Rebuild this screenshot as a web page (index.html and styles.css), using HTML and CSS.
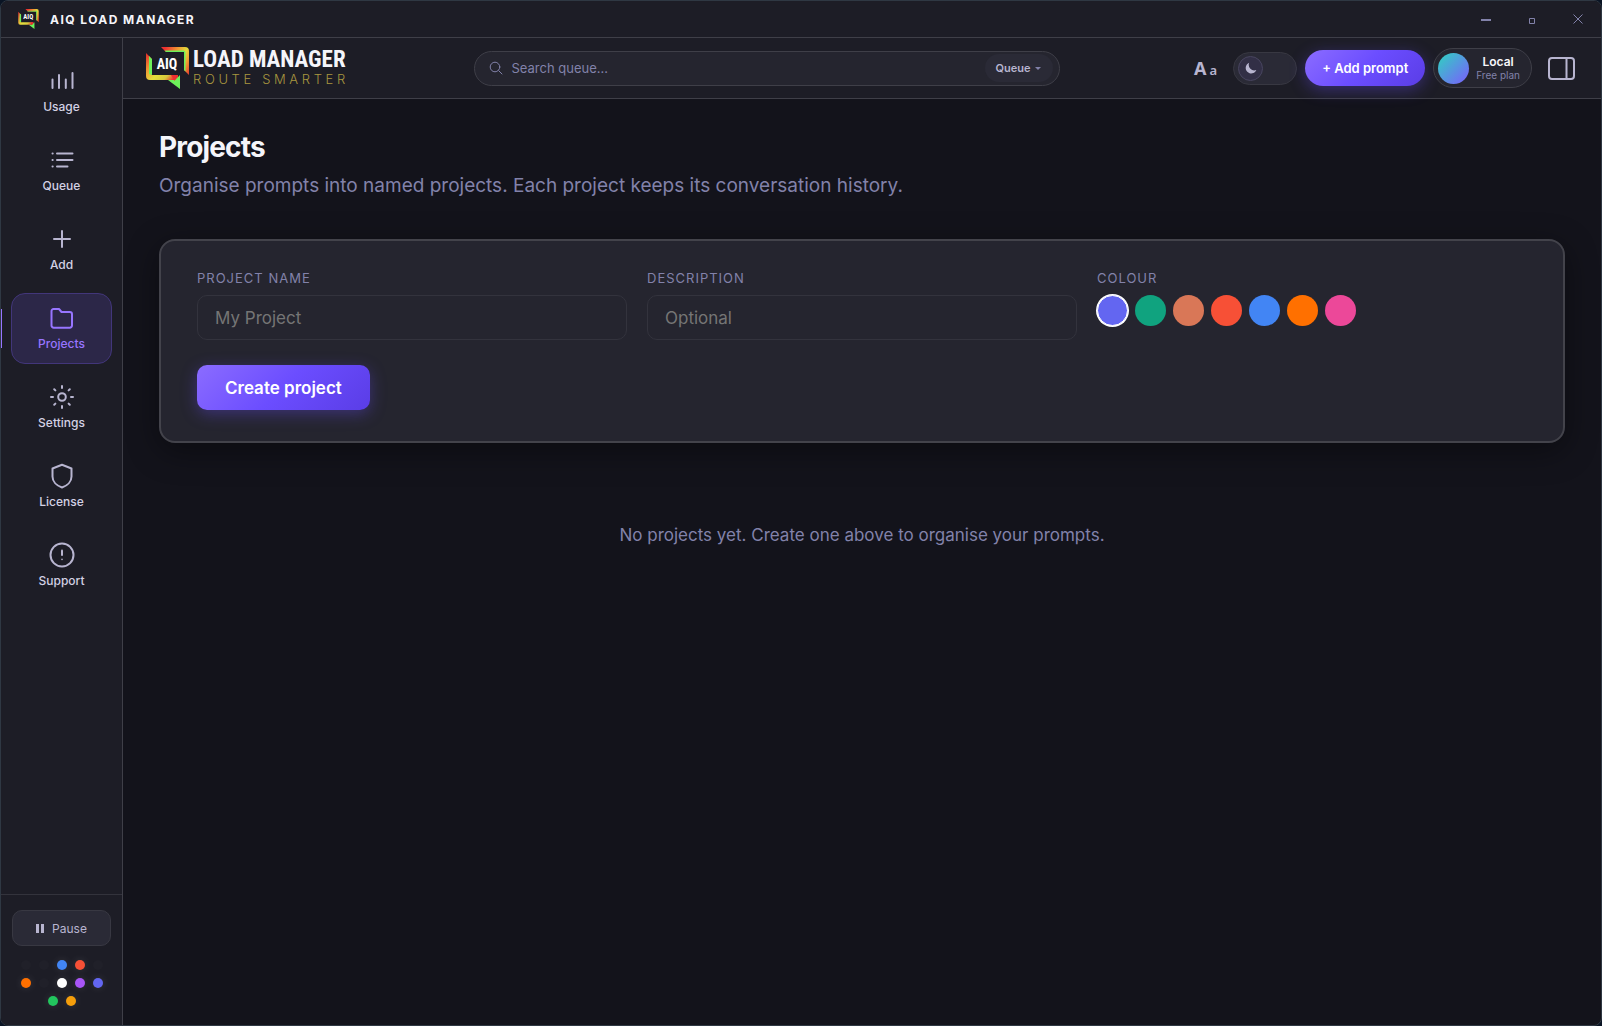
FILE: index.html
```
<!DOCTYPE html>
<html lang="en">
<head>
  <meta charset="UTF-8" />
  <meta name="viewport" content="width=device-width, initial-scale=1" />
  <title>AIQ Load Manager</title>
  <link rel="stylesheet" href="styles.css">
</head>
<body>
<div class="window">

  <!-- Title bar -->
  <div class="titlebar">
    <svg class="titlebar-icon" viewBox="0 0 43 42" aria-hidden="true"><use href="#mark" /></svg>
    <span class="titlebar-name">AIQ LOAD MANAGER</span>
    <div class="window-buttons">
      <button type="button" aria-label="Minimize"><svg width="10" height="10" viewBox="0 0 10 10"><path d="M0 6h10" stroke-width="2" /></svg></button>
      <button type="button" aria-label="Maximize"><svg width="10" height="10" viewBox="0 0 10 10"><path d="M2.500 4.500h5v5h-5z" /></svg></button>
      <button type="button" aria-label="Close"><svg width="10" height="10" viewBox="0 0 10 10"><path d="M.5.5l9 9M9.500.5l-9 9" /></svg></button>
    </div>
  </div>

  <div class="body">

    <!-- Sidebar -->
    <aside class="sidebar">
      <nav class="nav">
        <a class="nav-item" href="#usage">
          <svg viewBox="0 0 26 26"><path d="M3.500 20v-8.500M10 20V7M16.800 20v-8.500M23.500 20V5" /></svg>
          <span>Usage</span>
        </a>
        <a class="nav-item" href="#queue">
          <svg viewBox="0 0 26 26"><path d="M8 6.500h15.500M8 13h15.500M8 19.500h10.500M3.500 6.500h.2M3.500 13h.2M3.500 19.500h.2" /></svg>
          <span>Queue</span>
        </a>
        <a class="nav-item" href="#add">
          <svg viewBox="0 0 26 26"><path d="M13 5v16M5 13h16" /></svg>
          <span>Add</span>
        </a>
        <a class="nav-item active" href="#projects" aria-current="page">
          <svg viewBox="0 0 26 26"><path d="M2.500 20.500V6a2 2 0 0 1 2-2H10l2.500 3h8.300A2.200 2.200 0 0 1 23 9.200v11.300a2.200 2.200 0 0 1-2.200 2.200H4.700a2.200 2.200 0 0 1-2.200-2.200z" /></svg>
          <span>Projects</span>
        </a>
        <a class="nav-item" href="#settings">
          <svg viewBox="0 0 26 26"><circle cx="13" cy="13" r="3.800" /><path d="M13 2v2M13 22v2M2 13h2M22 13h2M5.200 5.200l1.200 1.200M19.600 19.600l1.200 1.200M5.200 20.800l1.200-1.200M19.600 6.400l1.200-1.200" /></svg>
          <span>Settings</span>
        </a>
        <a class="nav-item" href="#license">
          <svg viewBox="0 0 26 26"><path d="M13 1.800l9.500 3.700v8c0 5-4 9.200-9.500 11-5.500-1.800-9.500-6-9.500-11v-8z" /></svg>
          <span>License</span>
        </a>
        <a class="nav-item" href="#support">
          <svg viewBox="0 0 26 26"><circle cx="13" cy="13" r="11.500" /><path d="M13 8.500v4.500" /><path d="M13 17.300v.2" stroke-width="1.500" /></svg>
          <span>Support</span>
        </a>
      </nav>

      <div class="sidebar-footer">
        <button class="pause" type="button">
          <svg width="8" height="9" viewBox="0 0 8 9" aria-hidden="true"><path d="M0 0h3v9H0zM5 0h3v9H5z" /></svg>
          Pause
        </button>
        <div class="dots">
          <i class="dot"></i>
          <i class="dot"></i>
          <i class="dot blue"></i>
          <i class="dot red"></i>
          <i class="dot"></i>
          <i class="dot orange"></i>
          <i class="dot"></i>
          <i class="dot white"></i>
          <i class="dot purple"></i>
          <i class="dot indigo"></i>
          <i class="dot green"></i>
          <i class="dot amber"></i>
        </div>
      </div>
    </aside>

    <div class="content">

      <!-- Header -->
      <header class="header">
        <a class="logo" href="#home">
          <svg class="logo-mark" viewBox="0 0 43 42" role="img" aria-label="AIQ">
            <defs>
              <linearGradient id="top" gradientUnits="userSpaceOnUse" x1="15" y1="10" x2="46" y2="24">
                <stop offset="0" stop-color="#ee3030" />
                <stop offset=".35" stop-color="#f09a32" />
                <stop offset=".6" stop-color="#e0dc3c" />
                <stop offset=".75" stop-color="#f0a032" />
                <stop offset="1" stop-color="#e3262b" />
              </linearGradient>
              <linearGradient id="bottom" gradientUnits="userSpaceOnUse" x1="0" y1="6" x2="33" y2="36">
                <stop offset="0" stop-color="#e3262b" />
                <stop offset=".25" stop-color="#f09032" />
                <stop offset=".5" stop-color="#e4e03c" />
                <stop offset=".7" stop-color="#d8c83c" />
                <stop offset=".85" stop-color="#ee3030" />
              </linearGradient>
            </defs>
            <g id="mark">
              <path fill="url(#top)" d="M15 0h24a4 4 0 0 1 4 4v24l-5-5V5H20z" />
              <path fill="#6df05a" d="M18.500 3.500h19a2 2 0 0 1 2 2v19L38 23V5H20z" />
              <path fill="url(#bottom)" d="M0 6l5.500 5.500V28H32v5H4a4 4 0 0 1-4-4z" />
              <path fill="#6df05a" d="M3 9l3 3v16l-3-1zM34 28v14L22 33h7z" />
              <path fill="#ee3030" d="M25 28h7l-3.500 6z" />
              <text x="21" y="22" class="mark-text">AIQ</text>
            </g>
          </svg>
          <span class="logo-text">
            <span class="logo-name">LOAD MANAGER</span>
            <span class="logo-tagline">ROUTE SMARTER</span>
          </span>
        </a>

        <form class="search" role="search">
          <svg width="14" height="14" viewBox="0 0 14 14" aria-hidden="true"><circle cx="6" cy="6" r="4.800" /><path d="M9.700 9.700l3.300 3.300" /></svg>
          <input type="search" placeholder="Search queue..." aria-label="Search queue">
          <span class="scope">
            <select aria-label="Search scope">
              <option>Queue</option>
              <option>Projects</option>
            </select>
          </span>
        </form>

        <div class="actions">
          <button class="text-size" type="button" aria-label="Text size"><b>A</b><small>a</small></button>
          <label class="theme">
            <input type="checkbox" aria-label="Light theme">
            <span class="knob"><svg width="12" height="12" viewBox="0 0 12 12"><path d="M4.200.8A5.500 5.500 0 1 0 11.300 8 5.500 5.500 0 0 1 4.200.8z" /></svg></span>
          </label>
          <button class="add-prompt" type="button">+ Add prompt</button>
          <button class="account" type="button">
            <span class="avatar"></span>
            <span class="account-text">
              <span class="account-name">Local</span>
              <span class="account-plan">Free plan</span>
            </span>
          </button>
          <button class="panel-toggle" type="button" aria-label="Toggle side panel">
            <svg width="27" height="23" viewBox="0 0 27 23"><rect x="1" y="1" width="25" height="21" rx="3" /><path d="M18.500 1v21" /></svg>
          </button>
        </div>
      </header>

      <!-- Projects page -->
      <main class="page">
        <h1>Projects</h1>
        <p class="subtitle">Organise prompts into named projects. Each project keeps its conversation history.</p>

        <form class="card">
          <div class="fields">
            <div class="field">
              <label for="name">PROJECT NAME</label>
              <input type="text" id="name" placeholder="My Project">
            </div>
            <div class="field">
              <label for="description">DESCRIPTION</label>
              <input type="text" id="description" placeholder="Optional">
            </div>
            <div class="field" role="radiogroup" aria-labelledby="colour-label">
              <span class="field-label" id="colour-label">COLOUR</span>
              <div class="swatches">
                <input class="indigo" type="radio" name="colour" aria-label="Indigo" checked>
                <input class="teal" type="radio" name="colour" aria-label="Teal">
                <input class="clay" type="radio" name="colour" aria-label="Clay">
                <input class="red" type="radio" name="colour" aria-label="Red">
                <input class="blue" type="radio" name="colour" aria-label="Blue">
                <input class="orange" type="radio" name="colour" aria-label="Orange">
                <input class="pink" type="radio" name="colour" aria-label="Pink">
              </div>
            </div>
          </div>
          <button class="create" type="button">Create project</button>
        </form>

        <p class="empty">No projects yet. Create one above to organise your prompts.</p>
      </main>
    </div>
  </div>
</div>
</body>
</html>
```

FILE: styles.css
```
:root {
  --bg: #13131b;
  --bar: #1d1d26;
  --card: #25252f;
  --raised: #2a2a36;
  --line: #3f3f48;
  --text: #f5f5fa;
  --soft: #b8b5d0;
  --muted: #8282aa;
  --accent: #9775ff;
}
* {
  box-sizing: border-box;
}
html, body {
  margin: 0;
  height: 100%;
}
body {
  background: #0a1424;
  color: var(--text);
  font-family: Inter, "Liberation Sans", sans-serif;
}
button, input, select {
  font-family: inherit;
  color: inherit;
}
button {
  cursor: pointer;
}
a {
  color: inherit;
  text-decoration: none;
}
svg {
  fill: none;
  stroke: currentColor;
  stroke-linecap: round;
  stroke-linejoin: round;
}

.window {
  display: flex;
  flex-direction: column;
  min-height: 100%;
  border: 1px solid #2f3843;
  border-radius: 8px;
  background: var(--bg);
  overflow: hidden;
}

/* Title bar */
.titlebar {
  display: flex;
  align-items: center;
  gap: 11px;
  height: 37px;
  padding-left: 17px;
  background: var(--bar);
  border-bottom: 1px solid var(--line);
}
.titlebar-icon {
  width: 21px;
  height: 20px;
  stroke: none;
}
.titlebar-name {
  font-size: 12px;
  font-weight: 700;
  letter-spacing: 0.12em;
}
.window-buttons {
  display: flex;
  margin-left: auto;
}
.window-buttons button {
  display: grid;
  place-items: center;
  width: 46px;
  height: 36px;
  padding: 0;
  border: 0;
  background: none;
  color: var(--muted);
}
.window-buttons svg {
  stroke-linecap: butt;
  stroke-linejoin: miter;
}

.body {
  display: flex;
  flex: 1;
}

/* Sidebar */
.sidebar {
  display: flex;
  flex-direction: column;
  flex: none;
  width: 122px;
  background: var(--bar);
  border-right: 1px solid var(--line);
}
.nav {
  display: flex;
  flex-direction: column;
  gap: 8px;
  padding: 18px 10px;
}
.nav-item {
  position: relative;
  display: flex;
  flex-direction: column;
  align-items: center;
  gap: 6px;
  padding: 11px 0 12px;
  border: 1px solid transparent;
  border-radius: 14px;
  color: var(--soft);
  font-size: 12px;
  font-weight: 500;
  line-height: 14px;
}
.nav-item span {
  color: #d3d1e4;
}
.nav-item svg {
  width: 26px;
  height: 26px;
  stroke-width: 2;
}
.nav-item.active {
  background: #2c2748;
  border-color: #42367a;
}
.nav-item.active, .nav-item.active span {
  color: var(--accent);
}
.nav-item.active::before {
  content: "";
  position: absolute;
  left: -12px;
  top: 15px;
  bottom: 15px;
  width: 2px;
  background: var(--accent);
}
.sidebar-footer {
  margin-top: auto;
  padding: 15px 11px 19px;
  border-top: 1px solid #33333c;
}
.pause {
  display: flex;
  align-items: center;
  justify-content: center;
  gap: 8px;
  width: 100%;
  height: 36px;
  border: 1px solid #383842;
  border-radius: 10px;
  background: var(--raised);
  color: var(--soft);
  font-size: 12px;
}
.pause svg {
  fill: currentColor;
  stroke: none;
}
.dots {
  display: flex;
  flex-wrap: wrap;
  justify-content: center;
  gap: 8px;
  padding: 14px 8px 0;
}
.dot {
  width: 10px;
  height: 10px;
  border-radius: 50%;
  background: #202029;
}
.dot[class*=" "] {
  box-shadow: 0 0 8px rgba(255, 255, 255, 0.12);
}

.dot.white { background: #ffffff; }
.dot.purple { background: #a855f7; }
.dot.green { background: #22c55e; }
.dot.amber { background: #f59e0b; }
.dot.blue, .swatches .blue { background: #4285f4; }
.dot.red, .swatches .red { background: #f75036; }
.dot.orange, .swatches .orange { background: #ff7000; }
.dot.indigo, .swatches .indigo { background: #6366f1; }
.swatches .teal { background: #10a37f; }
.swatches .clay { background: #d97757; }
.swatches .pink { background: #ec4899; }

/* Header */
.content {
  flex: 1;
  min-width: 0;
}
.header {
  display: flex;
  align-items: center;
  height: 61px;
  padding: 0 18px 0 23px;
  background: var(--bar);
  border-bottom: 1px solid var(--line);
}
.logo {
  display: flex;
  align-items: center;
  gap: 4px;
  flex: none;
}
.logo-mark {
  width: 43px;
  height: 42px;
  stroke: none;
}
.mark-text, .logo-name {
  font-family: "Roboto Condensed", Roboto, sans-serif;
  font-weight: 700;
}
.mark-text {
  fill: #ffffff;
  stroke: none;
  font-size: 14px;
  text-anchor: middle;
}
.logo-text {
  display: flex;
  flex-direction: column;
  padding-bottom: 2px;
}
.logo-name {
  font-size: 23px;
  line-height: 24px;
}
.logo-tagline {
  color: #a8963f;
  font-size: 13px;
  font-weight: 300;
  line-height: 14px;
  letter-spacing: 0.28em;
}
.search {
  display: flex;
  align-items: center;
  flex: 0 1 586px;
  min-width: 200px;
  height: 35px;
  margin: 0 auto;
  padding: 0 6px 0 14px;
  border: 1px solid var(--line);
  border-radius: 18px;
  background: var(--card);
  color: var(--muted);
}
.search svg {
  flex: none;
}
.search input {
  flex: 1;
  min-width: 0;
  padding: 0 8px;
  border: 0;
  outline: 0;
  background: none;
  font-size: 13px;
}
.search input::placeholder {
  color: var(--muted);
}
.scope {
  position: relative;
}
.scope select {
  appearance: none;
  width: 68px;
  height: 28px;
  padding: 0 0 0 10px;
  border: 0;
  border-radius: 14px;
  background: var(--raised);
  color: var(--soft);
  font-size: 11px;
  font-weight: 600;
}
.scope::after {
  content: "";
  position: absolute;
  right: 12px;
  top: 13px;
  border: 3px solid transparent;
  border-top-color: var(--muted);
  border-bottom: 0;
}
.actions {
  display: flex;
  align-items: center;
  gap: 8px;
  flex: none;
}
.text-size {
  display: flex;
  align-items: baseline;
  gap: 3px;
  padding: 0 8px;
  border: 0;
  background: none;
  color: var(--soft);
  font-family: "Noto Sans", sans-serif;
}
.text-size b {
  font-size: 18px;
}
.text-size small {
  font-size: 13px;
  font-weight: 600;
}
.theme {
  width: 64px;
  height: 33px;
  padding: 3px 4px;
  border: 1px solid #383842;
  border-radius: 17px;
  background: var(--raised);
  cursor: pointer;
}
.theme input {
  position: absolute;
  opacity: 0;
}
.knob {
  display: grid;
  place-items: center;
  width: 25px;
  height: 25px;
  border: 1px solid #48455f;
  border-radius: 50%;
  background: #322f46;
  color: var(--soft);
}
.knob svg {
  fill: currentColor;
  stroke: none;
}
.theme input:checked + .knob {
  margin-left: auto;
}
.add-prompt, .create {
  border: 0;
  background: linear-gradient(135deg, #8b6cff 0%, #6b4dff 50%, #5a3de6 100%);
  box-shadow: 0 4px 16px rgba(107, 77, 255, 0.35);
  color: #ffffff;
  font-weight: 600;
}
.add-prompt {
  height: 36px;
  padding: 0 17px;
  border-radius: 18px;
  font-size: 13px;
}
.account {
  display: flex;
  align-items: center;
  gap: 7px;
  height: 40px;
  padding: 0 11px 0 4px;
  border: 1px solid var(--line);
  border-radius: 20px;
  background: var(--card);
}
.avatar {
  width: 31px;
  height: 31px;
  border-radius: 50%;
  background: linear-gradient(135deg, #2dd4bf, #7c5cff);
}
.account-text {
  display: flex;
  flex-direction: column;
  align-items: center;
}
.account-name {
  font-size: 12px;
  font-weight: 600;
  line-height: 15px;
}
.account-plan {
  color: var(--muted);
  font-size: 10px;
  line-height: 13px;
}
.panel-toggle {
  display: grid;
  padding: 0 8px;
  border: 0;
  background: none;
  color: var(--soft);
}
.panel-toggle svg {
  stroke-width: 2;
}

/* Page */
.page {
  padding: 31px 36px;
}
h1 {
  margin: 0;
  font-size: 28px;
  font-weight: 700;
  line-height: 34px;
  letter-spacing: -0.03em;
}
.subtitle {
  margin: 9px 0 40px;
  color: var(--muted);
  font-size: 19px;
  line-height: 26px;
}
.card {
  padding: 30px 36px 31px;
  border: 2px solid #43434b;
  border-radius: 16px;
  background: var(--card);
  box-shadow: 0 8px 32px rgba(0, 0, 0, 0.4);
}
.fields {
  display: grid;
  grid-template-columns: repeat(3, 1fr);
  gap: 20px;
}
.field {
  display: flex;
  flex-direction: column;
  gap: 9px;
  min-width: 0;
}
.field label, .field-label {
  color: var(--muted);
  font-size: 13px;
  line-height: 15px;
  letter-spacing: 1px;
}
.field input[type="text"] {
  width: 100%;
  height: 45px;
  padding: 0 17px;
  border: 1px solid #33333d;
  border-radius: 10px;
  outline: 0;
  background: var(--card);
  font-size: 17px;
}
.field input[type="text"]::placeholder {
  color: #757575;
}
.swatches {
  display: flex;
  flex-wrap: wrap;
  gap: 7px;
}
.swatches input {
  appearance: none;
  width: 31px;
  height: 31px;
  margin: 0;
  border-radius: 50%;
  cursor: pointer;
}
.swatches input:checked {
  border: 1px solid #ffffff;
  box-shadow: 0 0 0 1px #ffffff;
}
.create {
  height: 45px;
  margin-top: 25px;
  padding: 0 28px;
  border-radius: 10px;
  font-size: 17px;
}
.empty {
  margin: 81px 0;
  color: var(--muted);
  font-size: 17px;
  line-height: 22px;
  text-align: center;
}
```
